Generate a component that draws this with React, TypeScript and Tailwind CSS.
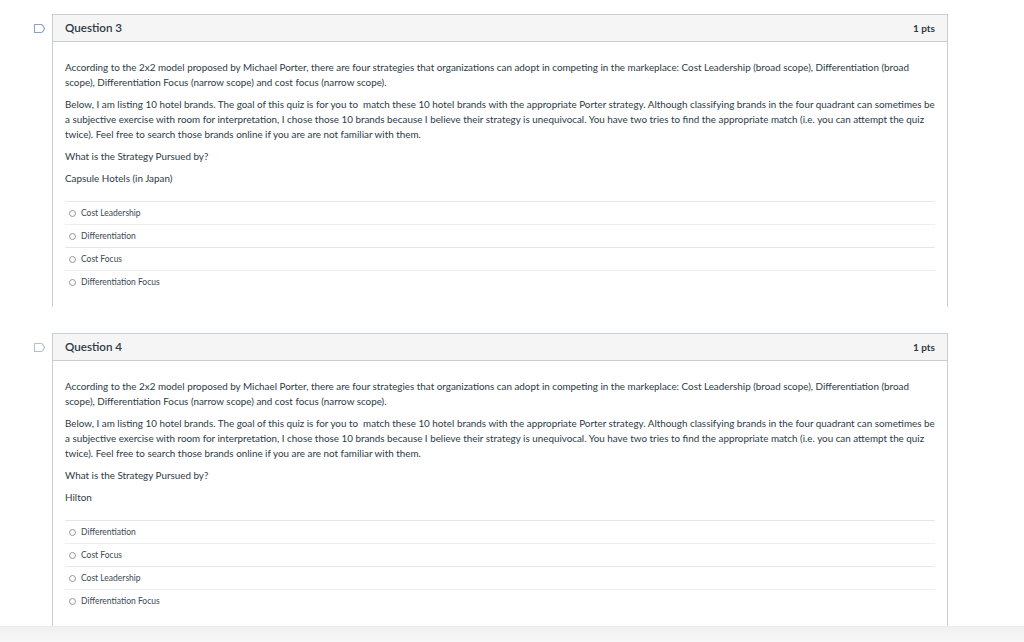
import React from "react";

const intro1 =
  "According to the 2x2 model proposed by Michael Porter, there are four strategies that organizations can adopt in competing in the markeplace: Cost Leadership (broad scope), Differentiation (broad scope), Differentiation Focus (narrow scope) and cost focus (narrow scope).";
const intro2 =
  "Below, I am listing 10 hotel brands. The goal of this quiz is for you to \u00a0match these 10 hotel brands with the appropriate Porter strategy. Although classifying brands in the four quadrant can sometimes be a subjective exercise with room for interpretation, I chose those 10 brands because I believe their strategy is unequivocal. You have two tries to find the appropriate match (i.e. you can attempt the quiz twice). Feel free to search those brands online if you are are not familiar with them.";

function Flag({ color }: { color: string }) {
  return (
    <svg width="13" height="11" viewBox="0 0 13 11" className="mt-[9px]">
      <path
        d="M1.5 1.5 H8 Q9 1.5 9.7 2.4 L11.6 5.5 L9.7 8.6 Q9 9.5 8 9.5 H1.5 Z"
        fill="none"
        stroke={color}
        strokeWidth="1.1"
        strokeLinejoin="round"
      />
    </svg>
  );
}

function Question({
  num,
  subject,
  options,
  flag,
}: {
  num: number;
  subject: string;
  options: string[];
  flag: string;
}) {
  return (
    <div className="flex">
      <div className="w-[19px] shrink-0">
        <Flag color={flag} />
      </div>
      <div className="w-[896px] border-x border-[#c7cdd1] bg-white h-[293px] flex flex-col">
        <div className="h-[28px] bg-[#f5f5f5] border-y border-[#c7cdd1] flex items-center justify-between px-[12px]">
          <span className="text-[11.6px] font-semibold text-[#2d3b45]">Question {num}</span>
          <span className="text-[10px] font-bold text-[#2d3b45]">1 pts</span>
        </div>
        <div className="px-[12px] pt-[18px] text-[9.85px] leading-[15px] text-[#2d3b45]">
          <p>{intro1}</p>
          <p className="mt-[7px]">{intro2}</p>
          <p className="mt-[7px]">What is the Strategy Pursued by?</p>
          <p className="mt-[7px]">{subject}</p>
          <div className="mt-[15px]">
            {options.map((o, i) => (
              <div
                key={o}
                className={
                  "h-[23px] flex items-center border-t " +
                  (i % 2 === 0 ? "border-[#e4e6e8]" : "border-[#eceeef]")
                }
              >
                <span className="ml-[4px] w-[7px] h-[7px] rounded-full border border-[#8e9aa3] mr-[5px] mt-[1px]" />
                <span className="text-[8.5px] text-[#3b4a55]">{o}</span>
              </div>
            ))}
          </div>
        </div>
      </div>
    </div>
  );
}

export default function App() {
  return (
    <div
      className="w-[1024px] h-[642px] bg-white overflow-hidden flex flex-col"
      style={{ fontFamily: "Lato, 'Noto Sans', sans-serif" }}
    >
      <div className="flex-1 pl-[33px] pt-[14px] flex flex-col gap-[26px]">
        <Question
          num={3}
          subject="Capsule Hotels (in Japan)"
          options={["Cost Leadership", "Differentiation", "Cost Focus", "Differentiation Focus"]}
          flag="#8da0bd"
        />
        <Question
          num={4}
          subject="Hilton"
          options={["Differentiation", "Cost Focus", "Cost Leadership", "Differentiation Focus"]}
          flag="#b3c0d2"
        />
      </div>
      <div className="h-[16px] shrink-0 bg-gradient-to-b from-[#f0f0f0] to-[#f7f7f7] border-t border-[#ececec]" />
    </div>
  );
}
